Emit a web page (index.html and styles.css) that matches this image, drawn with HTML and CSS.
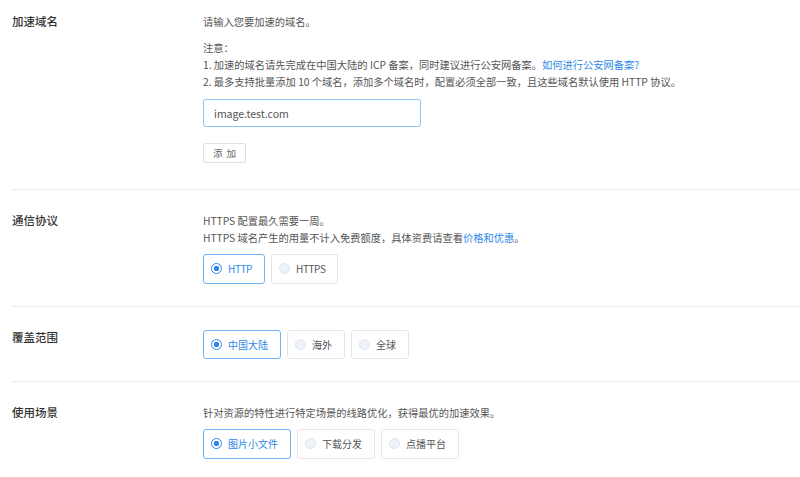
FILE: index.html
```html
<!DOCTYPE html>
<html lang="zh-CN">
<head>
<meta charset="utf-8">
<title>加速域名</title>
<link rel="stylesheet" href="styles.css">
</head>
<body>
<div class="page">
  <section class="row row-domain">
    <div class="label">加速域名</div>
    <div class="content">
      <p class="desc">请输入您要加速的域名。</p>
      <div class="notice">
        <p>注意：</p>
        <p>1. 加速的域名请先完成在中国大陆的 ICP 备案，同时建议进行公安网备案。<a class="link" href="#">如何进行公安网备案?</a></p>
        <p>2. 最多支持批量添加 10 个域名，添加多个域名时，配置必须全部一致，且这些域名默认使用 HTTP 协议。</p>
      </div>
      <input class="domain-input" type="text" value="image.test.com">
      <button class="btn" type="button">添 加</button>
    </div>
  </section>

  <section class="row">
    <div class="label">通信协议</div>
    <div class="content">
      <p class="desc">HTTPS 配置最久需要一周。</p>
      <p class="desc">HTTPS 域名产生的用量不计入免费额度，具体资费请查看<a class="link" href="#">价格和优惠</a>。</p>
      <div class="radios">
        <label class="radio checked latin"><span class="dot"></span>HTTP</label>
        <label class="radio latin"><span class="dot"></span>HTTPS</label>
      </div>
    </div>
  </section>

  <section class="row">
    <div class="label">覆盖范围</div>
    <div class="content">
      <div class="radios flush">
        <label class="radio checked"><span class="dot"></span>中国大陆</label>
        <label class="radio"><span class="dot"></span>海外</label>
        <label class="radio"><span class="dot"></span>全球</label>
      </div>
    </div>
  </section>

  <section class="row last">
    <div class="label">使用场景</div>
    <div class="content">
      <p class="desc">针对资源的特性进行特定场景的线路优化，获得最优的加速效果。</p>
      <div class="radios">
        <label class="radio checked"><span class="dot"></span>图片小文件</label>
        <label class="radio"><span class="dot"></span>下载分发</label>
        <label class="radio"><span class="dot"></span>点播平台</label>
      </div>
    </div>
  </section>
</div>
</body>
</html>
```

FILE: styles.css
```css
* { box-sizing: border-box; }

html, body {
  margin: 0;
  padding: 0;
  background: #fff;
}

body {
  font-family: "Noto Sans CJK SC", "Noto Sans", sans-serif;
  color: #555;
  font-size: 10.25px;
}

.page {
  padding-left: 12px;
}

.row {
  display: grid;
  grid-template-columns: 191px 1fr;
  padding: 22px 0 22px;
  border-bottom: 1px solid #ebebf0;
}

.row-domain {
  padding-top: 13px;
  padding-bottom: 26px;
}

.row.last {
  border-bottom: none;
}

.label {
  font-size: 11.5px;
  line-height: 16px;
  font-weight: 500;
  color: #333;
}

.content p {
  margin: 0;
}

.desc {
  line-height: 17px;
  color: #555;
}

.notice {
  margin-top: 9px;
  line-height: 17px;
}

.link {
  color: #2f88e8;
  text-decoration: none;
}

.domain-input {
  display: block;
  margin-top: 9px;
  width: 218px;
  height: 28px;
  padding: 0 10px;
  border: 1px solid #8ec3f3;
  border-radius: 3px;
  font-family: inherit;
  font-size: 10.5px;
  color: #555;
  outline: none;
}

.btn {
  display: block;
  margin-top: 16px;
  width: 43px;
  height: 20px;
  padding: 0;
  border: 1px solid #e0e0e0;
  border-radius: 2px;
  background: #fff;
  font-family: inherit;
  font-size: 9.5px;
  word-spacing: 2px;
  line-height: 18px;
  color: #666;
}

.radios {
  display: flex;
  gap: 6px;
  margin-top: 8px;
}

.radios.flush {
  margin-top: 1px;
}

.radio {
  display: flex;
  align-items: center;
  height: 29.5px;
  padding: 0 12px 0 7px;
  border: 1px solid #e6e6e6;
  border-radius: 3px;
  font-size: 10px;
  color: #555;
}

.radio.latin {
  letter-spacing: -0.4px;
}

.radio.checked {
  border-color: #6fb3f2;
  color: #2f88e8;
}

.dot {
  width: 11px;
  height: 11px;
  margin-right: 6px;
  border-radius: 50%;
  border: 1px solid #dfe6f0;
  background: #eef2f9;
  flex: none;
}

.radio.checked .dot {
  border: 1.5px solid #2f88e8;
  background: radial-gradient(circle, #2f88e8 0 2.6px, #fff 3px);
}
```
